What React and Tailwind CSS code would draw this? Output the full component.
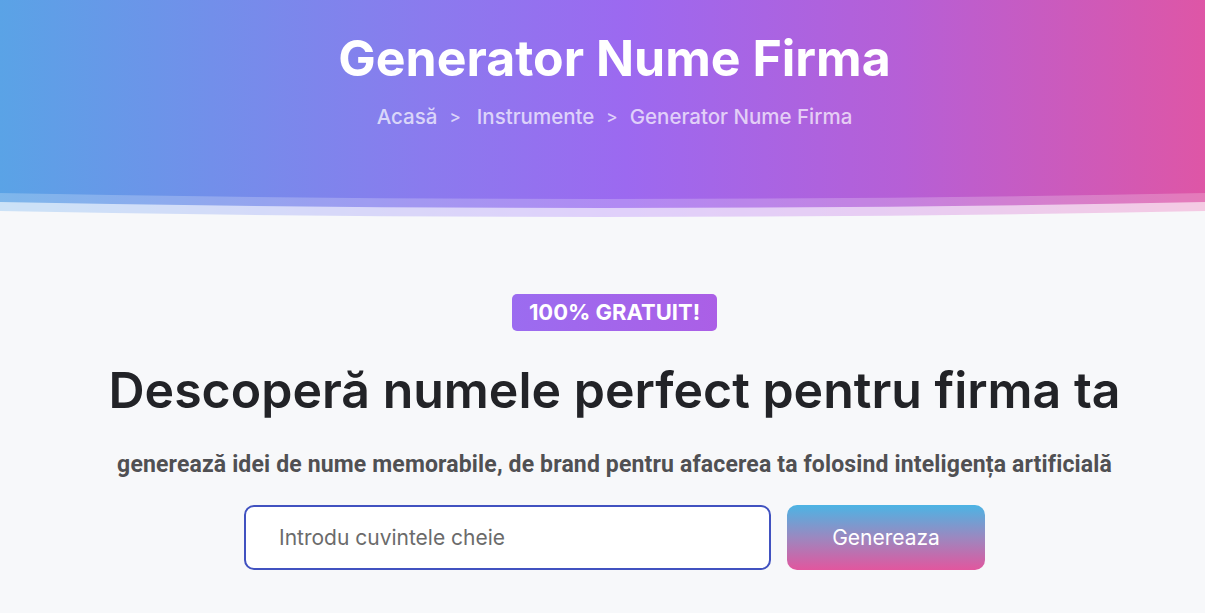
import React, { useState } from "react";

const Waves = () => (
  <svg
    className="absolute bottom-0 left-0 w-full h-[24px]"
    viewBox="0 0 1205 24"
    preserveAspectRatio="none"
  >
    <path d="M0 0 Q602 12 1205 0 L1205 24 L0 24 Z" fill="#ffffff" fillOpacity="0.22" />
    <path d="M0 9 Q602 21 1205 9 L1205 24 L0 24 Z" fill="#ffffff" fillOpacity="0.6" />
    <path d="M0 18 Q602 30 1205 18 L1205 24 L0 24 Z" fill="#f7f8fa" />
  </svg>
);

const App = () => {
  const [keywords, setKeywords] = useState("");

  return (
    <div className="min-h-screen bg-[#f7f8fa] font-['Inter',sans-serif]">
      <header className="relative h-[217px] bg-[linear-gradient(90deg,#5aa3e6_0%,#8a7bee_35%,#9c69f0_52%,#b65fd6_75%,#de56a6_100%)] pl-[24px]">
        <div className="flex flex-col items-center pt-[29px]">
          <h1 className="text-[50px] leading-[58px] font-bold text-white">
            Generator Nume Firma
          </h1>
          <nav className="mt-[16px] flex items-center text-[20.5px] leading-[28px] font-medium text-white/70">
            <span>Acasă</span>
            <span className="mx-[12px] text-[17px]">&gt;</span>
            <span className="ml-[4px]">Instrumente</span>
            <span className="mx-[12px] text-[17px]">&gt;</span>
            <span>Generator Nume Firma</span>
          </nav>
        </div>
        <Waves />
      </header>

      <main className="flex flex-col items-center pl-[24px] pt-[77px]">
        <span className="rounded-[5px] bg-[linear-gradient(90deg,#9b6cf0,#ab5fe6)] px-[17px] py-[4px] text-[22px] leading-[29px] font-bold text-white">
          100% GRATUIT!
        </span>
        <h2 className="mt-[29px] text-[50px] leading-[60px] font-semibold text-[#222327]">
          Descoperă numele perfect pentru firma ta
        </h2>
        <p className="mt-[30px] font-['Roboto',sans-serif] text-[23px] leading-[30px] font-bold tracking-[0.15px] text-[#505053]">
          generează idei de nume memorabile, de brand pentru afacerea ta folosind inteligența artificială
        </p>
        <div className="mt-[25px] flex gap-[16px]">
          <input
            type="text"
            value={keywords}
            onChange={(e) => setKeywords(e.target.value)}
            placeholder="Introdu cuvintele cheie"
            className="h-[65px] w-[527px] rounded-[10px] border-2 border-[#4152c0] bg-white px-[33px] text-[21px] text-[#333] outline-none placeholder:text-[#6b6b6b]"
          />
          <button className="h-[65px] w-[198px] rounded-[10px] bg-[linear-gradient(180deg,#4cb4e4_0%,#9b88c0_50%,#e2569e_100%)] text-[21px] text-white">
            Genereaza
          </button>
        </div>
      </main>
    </div>
  );
};

export default App;
